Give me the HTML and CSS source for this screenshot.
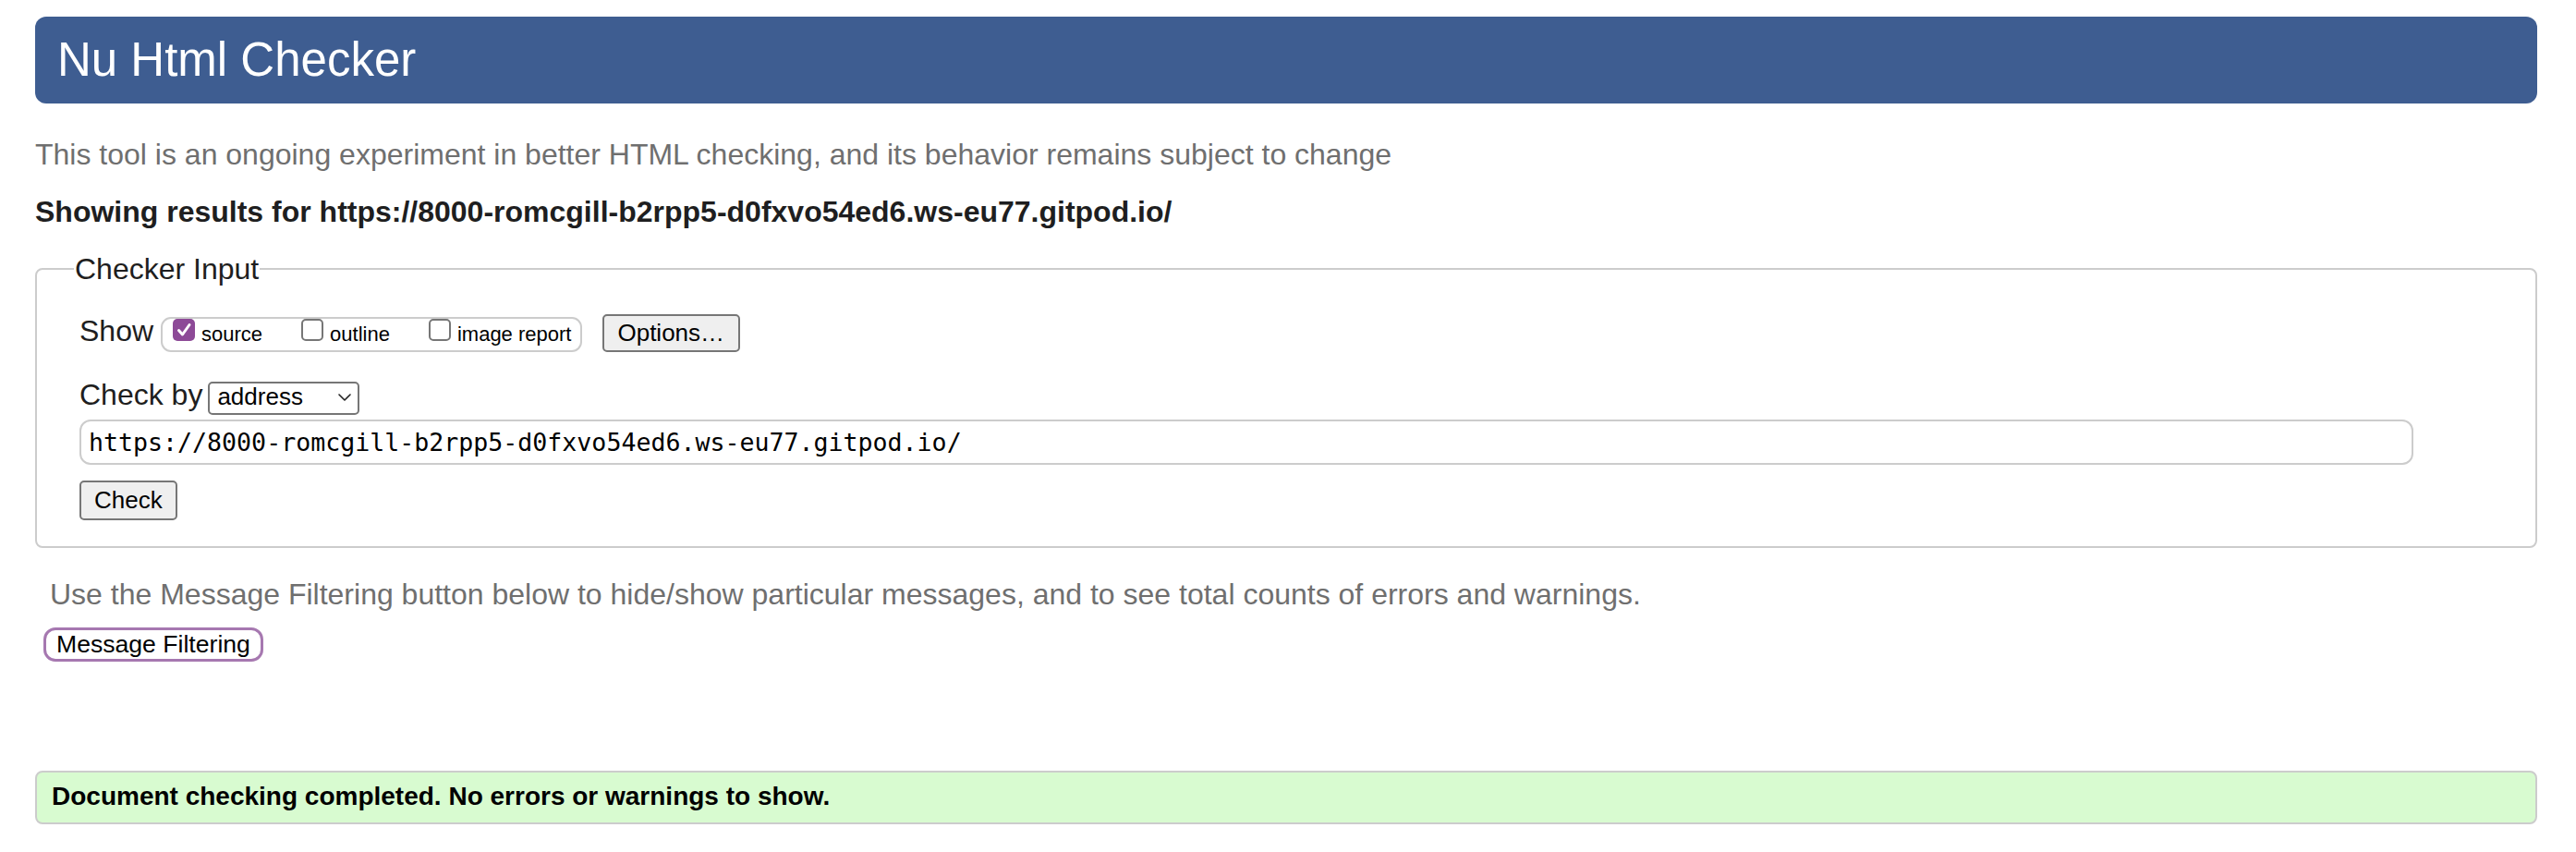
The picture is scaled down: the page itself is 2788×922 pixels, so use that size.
FILE: index.html
```html
<!DOCTYPE html>
<html lang="en">
<head>
<meta charset="utf-8">
<title>Nu Html Checker</title>
<link rel="stylesheet" href="styles.css">
</head>
<body>
<h1 class="banner">Nu Html Checker</h1>
<p class="intro">This tool is an ongoing experiment in better HTML checking, and its behavior remains subject to change</p>
<p class="results">Showing results for https://8000-romcgill-b2rpp5-d0fxvo54ed6.ws-eu77.gitpod.io/</p>
<form class="checker">
  <fieldset class="input-box">
    <legend class="legend">Checker Input</legend>
    <div class="row row-show">
      <span class="label label-show">Show</span>
      <span class="show-group">
        <span class="opt"><span class="cb cb-on"><svg class="tick" width="24" height="24" viewBox="0 0 24 24"><path d="M6.5 12.5 L10.5 17 L18 6.5" fill="none" stroke="#fff" stroke-width="3" stroke-linecap="round" stroke-linejoin="round"/></svg></span><span class="opt-text">source</span></span><span class="opt"><span class="cb"></span><span class="opt-text">outline</span></span><span class="opt opt-last"><span class="cb"></span><span class="opt-text">image report</span></span>
      </span>
      <span class="btn btn-options">Options…</span>
    </div>
    <div class="row row-by">
      <span class="label label-by">Check by</span>
      <span class="select"><span class="select-text">address</span><svg class="chev" width="14" height="8" viewBox="0 0 14 8"><path d="M1 1 L7 7 L13 1" fill="none" stroke="#222" stroke-width="1.6" stroke-linecap="round" stroke-linejoin="round"/></svg></span>
    </div>
    <div class="url-field">https://8000-romcgill-b2rpp5-d0fxvo54ed6.ws-eu77.gitpod.io/</div>
    <div class="row row-check"><span class="btn btn-check">Check</span></div>
  </fieldset>
</form>
<p class="filter-note">Use the Message Filtering button below to hide/show particular messages, and to see total counts of errors and warnings.</p>
<div class="filter-wrap"><span class="filter-btn">Message Filtering</span></div>
<div class="success">Document checking completed. No errors or warnings to show.</div>
</body>
</html>
```

FILE: styles.css
```css
html, body {
  background: #ffffff;
}

body {
  margin: 0;
  padding: 18px 42px 0 38px;
  font-family: "Liberation Sans", Arial, Helvetica, sans-serif;
  color: #222222;
}

.banner {
  margin: 0;
  height: 94px;
  box-sizing: border-box;
  display: flex;
  align-items: center;
  padding-left: 24px;
  background: #3e5d91;
  border-radius: 12px;
  color: #ffffff;
  font-size: 51px;
  font-weight: normal;
  line-height: 58px;
}

.intro {
  margin: 37px 0 0 0;
  font-size: 32px;
  line-height: 36px;
  color: #6f6f6f;
}

.results {
  margin: 26px 0 0 0;
  font-size: 32px;
  line-height: 36px;
  font-weight: bold;
  color: #1e1e20;
}

.checker {
  margin: 28px 0 0 0;
}

.input-box {
  margin: 0;
  min-width: 0;
  padding: 0 0 28px 46px;
  border: 2px solid #cccccc;
  border-radius: 8px;
}

.legend {
  margin-left: -6px;
  padding: 0 1px;
  font-size: 32px;
  line-height: 32px;
  color: #1e1e20;
}

.row {
  display: flex;
  align-items: baseline;
}

.label {
  font-size: 32px;
  line-height: 36px;
  color: #1e1e20;
}

.row-show {
  margin-top: 33px;
}

.label-show {
  margin-right: 8px;
}

.show-group {
  display: inline-block;
  box-sizing: border-box;
  padding: 0 10px 4px 11px;
  border: 2px solid #cccccc;
  border-radius: 11px;
  font-size: 22px;
  line-height: 26px;
  color: #000000;
  white-space: nowrap;
}

.opt {
  margin-right: 42px;
}

.opt-last {
  margin-right: 0;
}

.cb {
  display: inline-block;
  overflow: hidden;
  vertical-align: baseline;
  box-sizing: border-box;
  width: 24px;
  height: 24px;
  border: 2px solid #767676;
  border-radius: 5px;
  background: #ffffff;
}

.cb-on {
  border: none;
  background: #8d4a97;
}

.tick {
  display: block;
}

.opt-text {
  margin-left: 7px;
}

.btn {
  display: inline-block;
  box-sizing: border-box;
  border: 2px solid #767676;
  border-radius: 5px;
  background: #efefef;
  color: #000000;
  font-size: 26px;
  line-height: 29px;
  white-space: nowrap;
}

.btn-options {
  margin-left: 22px;
  padding: 4px 15px 4px 14px;
}

.row-by {
  margin-top: 28px;
}

.label-by {
  margin-right: 6px;
}

.select {
  display: inline-flex;
  align-items: flex-start;
  justify-content: space-between;
  box-sizing: border-box;
  width: 164px;
  height: 36px;
  padding: 0 7px 0 8px;
  border: 2px solid #767676;
  border-radius: 5px;
  background: #ffffff;
  color: #000000;
  font-size: 26px;
  line-height: 29px;
}

.chev {
  align-self: center;
  margin-top: -3px;
}

.url-field {
  display: flex;
  align-items: center;
  box-sizing: border-box;
  margin-top: 5px;
  width: 2526px;
  height: 49px;
  padding-left: 8px;
  border: 2px solid #cccccc;
  border-radius: 12px;
  font-family: "DejaVu Sans Mono", "Liberation Mono", monospace;
  font-size: 26.6px;
  color: #000000;
  white-space: nowrap;
}

.row-check {
  margin-top: 17px;
}

.btn-check {
  padding: 5px 14px;
}

.filter-note {
  margin: 32px 0 0 16px;
  font-size: 32px;
  line-height: 36px;
  color: #6f6f6f;
}

.filter-wrap {
  margin: 18px 0 0 9px;
  display: flex;
}

.filter-btn {
  display: inline-block;
  box-sizing: border-box;
  padding: 0 11px;
  border: 3px solid #a678b0;
  border-radius: 13px;
  background: #ffffff;
  color: #000000;
  font-size: 26.6px;
  line-height: 31px;
  white-space: nowrap;
}

.success {
  margin-top: 118px;
  box-sizing: border-box;
  padding: 10px 16px 12px 16px;
  border: 2px solid #cccccc;
  border-radius: 8px;
  background: #d8fbd0;
  color: #000000;
  font-size: 28px;
  line-height: 32px;
  font-weight: bold;
}
```
